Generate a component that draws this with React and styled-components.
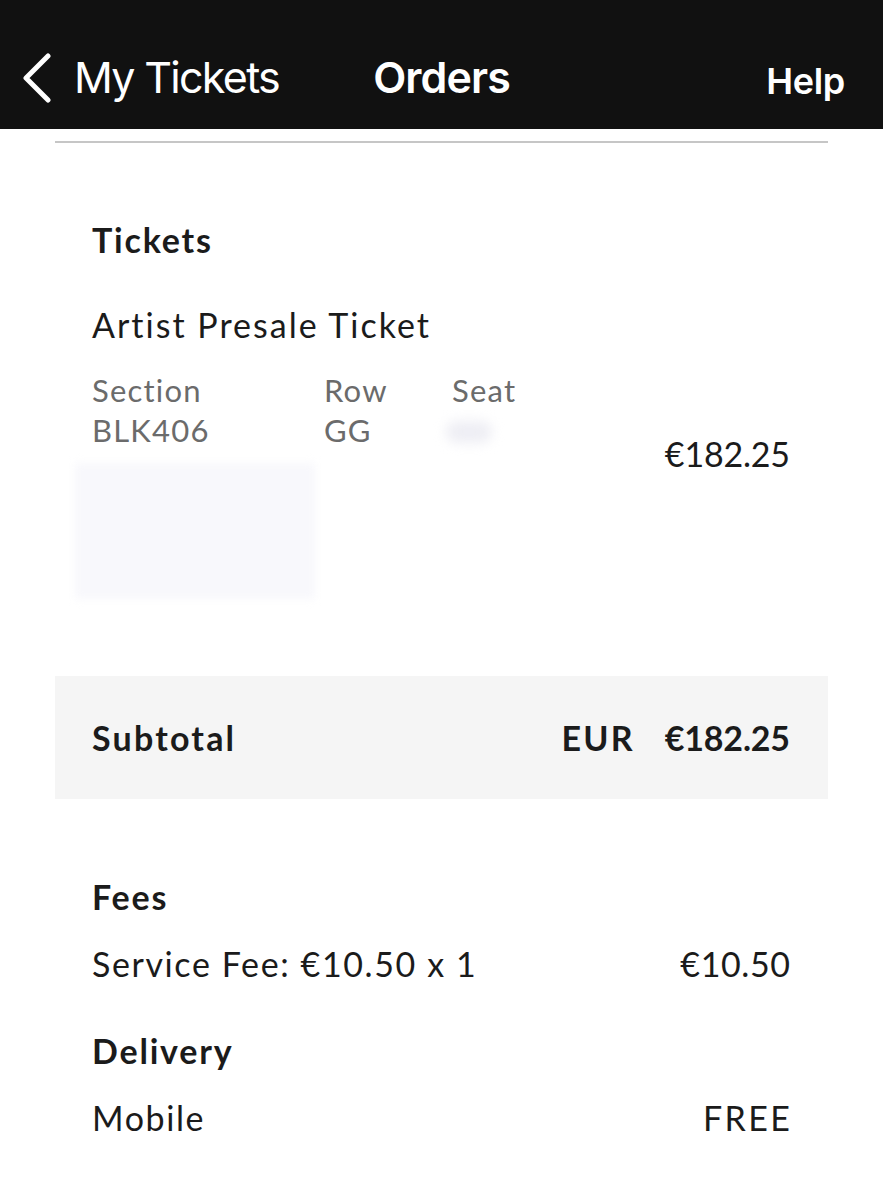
import styled, { createGlobalStyle } from "styled-components";

const GlobalStyle = createGlobalStyle`
  html, body {
    margin: 0;
    padding: 0;
    background: #ffffff;
  }
  body {
    font-family: Lato, "Noto Sans", sans-serif;
    color: #1b1b1b;
  }
`;

const TopBar = styled.header`
  height: 129px;
  box-sizing: border-box;
  padding: 26px 22px 0 22px;
  background: #111111;
  color: #ffffff;
  display: grid;
  grid-template-columns: 1fr auto 1fr;
  align-items: center;
  font-family: Inter, Roboto, sans-serif;
`;

const BackLink = styled.div`
  display: flex;
  align-items: center;
  gap: 22px;
  font-size: 43px;
  font-weight: 400;
  letter-spacing: -1.7px;
  line-height: 1;
`;

const Title = styled.div`
  font-size: 43px;
  font-weight: 600;
  letter-spacing: -0.9px;
  line-height: 1;
`;

const HelpLink = styled.div`
  justify-self: end;
  font-size: 36px;
  font-weight: 600;
  letter-spacing: -0.3px;
  line-height: 1;
  padding: 6px 16px 0 0;
`;

const Page = styled.main`
  margin: 0 55px;
`;

const Divider = styled.hr`
  margin: 12px 0 0;
  border: 0;
  height: 2px;
  background: #c6c6c6;
`;

const Section = styled.section`
  padding: 0 38px 0 37px;
  margin-top: ${(p) => p.$top || 0}px;
`;

const Heading = styled.h2`
  margin: ${(p) => p.$top || 0}px 0 0;
  font-size: 34px;
  font-weight: 700;
  letter-spacing: 1.8px;
  line-height: 1;
`;

const Text = styled.div`
  font-size: 34px;
  font-weight: 400;
  letter-spacing: ${(p) => (p.$wide ? 2 : 1.6)}px;
  line-height: 1;
  color: #1b1b1b;
`;

const Amount = styled.div`
  font-size: 34px;
  font-weight: ${(p) => (p.$bold ? 700 : 400)};
  letter-spacing: ${(p) => p.$spacing ?? 0.6}px;
  margin-right: ${(p) => -(p.$spacing ?? 0.6)}px;
  line-height: 1;
`;

const ItemRow = styled.div`
  display: flex;
  justify-content: space-between;
  align-items: ${(p) => (p.$center ? "center" : "flex-start")};
  margin-top: ${(p) => p.$top || 0}px;
`;

const ItemInfo = styled.div`
  display: flex;
  flex-direction: column;
`;

const SeatGrid = styled.div`
  display: grid;
  grid-template-columns: 232px 128px 120px;
  row-gap: 9px;
  margin-top: 33px;
  font-size: 31px;
  letter-spacing: 1.2px;
  line-height: 1;
  color: #6b6b6b;
`;

const SeatBlur = styled.div`
  width: 46px;
  height: 22px;
  margin: 6px 0 0 -6px;
  border-radius: 12px;
  background: #eeeef4;
  filter: blur(6px);
`;

const Redacted = styled.div`
  width: 240px;
  height: 136px;
  margin: 17px 0 0 -17px;
  background: #f8f8fc;
  filter: blur(4px);
`;

const Band = styled.div`
  margin-top: 77px;
  height: 123px;
  padding: 0 38px 0 37px;
  background: #f5f5f5;
  display: flex;
  align-items: center;
  justify-content: space-between;
  font-size: 34px;
  font-weight: 700;
  line-height: 1;
`;

const BandLabel = styled.span`
  letter-spacing: 2.2px;
`;

const Totals = styled.div`
  display: flex;
  align-items: center;
  gap: 30px;
`;

const Chevron = () => (
  <svg width="30" height="50" viewBox="0 0 30 50">
    <polyline
      points="26,3 4,25 26,47"
      fill="none"
      stroke="#ffffff"
      strokeWidth="5"
      strokeLinecap="round"
      strokeLinejoin="round"
    />
  </svg>
);

export default function App() {
  return (
    <>
      <GlobalStyle />
      <TopBar>
        <BackLink>
          <Chevron />
          <span>My Tickets</span>
        </BackLink>
        <Title>Orders</Title>
        <HelpLink>Help</HelpLink>
      </TopBar>
      <Page>
        <Divider />
        <Section $top={80}>
          <Heading>Tickets</Heading>
          <ItemRow $center $top={51}>
            <ItemInfo>
              <Text $wide>Artist Presale Ticket</Text>
              <SeatGrid>
                <span>Section</span>
                <span>Row</span>
                <span>Seat</span>
                <span>BLK406</span>
                <span>GG</span>
                <SeatBlur />
              </SeatGrid>
              <Redacted />
            </ItemInfo>
            <Amount $spacing={-0.2}>€182.25</Amount>
          </ItemRow>
        </Section>
        <Band>
          <BandLabel>Subtotal</BandLabel>
          <Totals>
            <BandLabel>EUR</BandLabel>
            <Amount $bold $spacing={-0.2}>€182.25</Amount>
          </Totals>
        </Band>
        <Section $top={81}>
          <Heading>Fees</Heading>
          <ItemRow $top={33}>
            <Text>Service Fee: €10.50 x 1</Text>
            <Amount>€10.50</Amount>
          </ItemRow>
          <Heading $top={53}>Delivery</Heading>
          <ItemRow $top={33}>
            <Text>Mobile</Text>
            <Amount $spacing={2.4}>FREE</Amount>
          </ItemRow>
        </Section>
      </Page>
    </>
  );
}
